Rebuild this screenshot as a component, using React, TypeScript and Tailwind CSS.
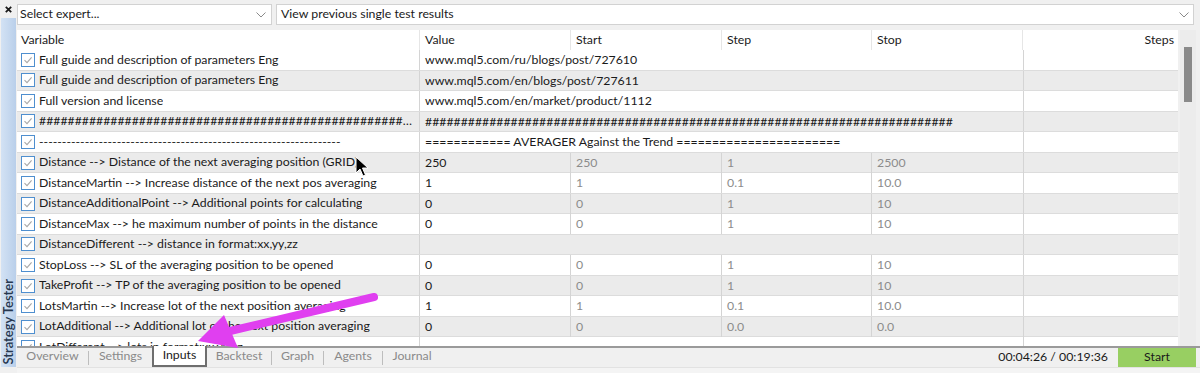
import React from 'react';

type Param = {
  name: string;
  value?: string;
  start?: string;
  step?: string;
  stop?: string;
  wide?: boolean;
};

const HASH = '#'.repeat(90);

const params: Param[] = [
  { name: 'Full guide and description of parameters Eng', value: 'www.mql5.com/ru/blogs/post/727610', wide: true },
  { name: 'Full guide and description of parameters Eng', value: 'www.mql5.com/en/blogs/post/727611', wide: true },
  { name: 'Full version and license', value: 'www.mql5.com/en/market/product/1112', wide: true },
  { name: HASH, value: '#'.repeat(74), wide: true },
  {
    name: '-'.repeat(66),
    value: '============ AVERAGER Against the Trend =======================',
    wide: true,
  },
  { name: 'Distance --> Distance of the next averaging position (GRID)', value: '250', start: '250', step: '1', stop: '2500' },
  { name: 'DistanceMartin --> Increase distance of the next pos averaging', value: '1', start: '1', step: '0.1', stop: '10.0' },
  { name: 'DistanceAdditionalPoint --> Additional points for calculating', value: '0', start: '0', step: '1', stop: '10' },
  { name: 'DistanceMax --> he maximum number of points in the distance', value: '0', start: '0', step: '1', stop: '10' },
  { name: 'DistanceDifferent --> distance in format:xx,yy,zz', value: '', wide: true },
  { name: 'StopLoss --> SL of the averaging position to be opened', value: '0', start: '0', step: '1', stop: '10' },
  { name: 'TakeProfit --> TP of the averaging position to be opened', value: '0', start: '0', step: '1', stop: '10' },
  { name: 'LotsMartin --> Increase lot of the next position averaging', value: '1', start: '1', step: '0.1', stop: '10.0' },
  { name: 'LotAdditional --> Additional lot of the next position averaging', value: '0', start: '0', step: '0.0', stop: '0.0' },
  { name: 'LotDifferent --> lots in format:xx,yy,zz', value: '', wide: true },
];

const cols = 'grid grid-cols-[403px_151px_151px_150px_151px_1fr]';

function Check() {
  return (
    <span className="flex h-[14px] w-[14px] shrink-0 items-center justify-center border border-[#4f8fcf] bg-white">
      <svg width="10" height="10" viewBox="0 0 10 10">
        <polyline points="1.5,5.2 4,7.6 8.6,2.4" fill="none" stroke="#a8a8a8" strokeWidth="1.1" />
      </svg>
    </span>
  );
}

function Chevron() {
  return (
    <svg width="10" height="6" viewBox="0 0 10 6" className="shrink-0">
      <polyline points="0.5,0.5 5,5 9.5,0.5" fill="none" stroke="#8a8a8a" strokeWidth="1" />
    </svg>
  );
}

function Row({ p, gray }: { p: Param; gray: boolean }) {
  return (
    <div className={`${cols} h-[20.5px] shrink-0 border-b border-[#dcdcdc] ${gray ? 'bg-[#ebebeb]' : 'bg-white'}`}>
      <div className="flex items-center gap-[4px] overflow-hidden border-r border-[#d4d4d4] pl-[4px] pr-[6px]">
        <Check />
        <span className="truncate">{p.name}</span>
      </div>
      {p.wide ? (
        <div className="col-span-4 overflow-hidden whitespace-nowrap pl-[5px] leading-[20px]">{p.value}</div>
      ) : (
        <>
          <div className="border-r border-[#d4d4d4] pl-[5px] leading-[20px]">{p.value}</div>
          <div className="border-r border-[#d4d4d4] pl-[5px] leading-[20px] text-[#8c8c8c]">{p.start}</div>
          <div className="border-r border-[#d4d4d4] pl-[5px] leading-[20px] text-[#8c8c8c]">{p.step}</div>
          <div className="pl-[5px] leading-[20px] text-[#8c8c8c]">{p.stop}</div>
        </>
      )}
      <div className="border-l border-[#d4d4d4]" />
    </div>
  );
}

const tabs = [
  { label: 'Overview', w: 'w-[71px]', sep: true },
  { label: 'Settings', w: 'w-[63px]', sep: false },
  { label: 'Inputs', w: 'w-[55px]', sep: false, active: true },
  { label: 'Backtest', w: 'w-[64px]', sep: true },
  { label: 'Graph', w: 'w-[51px]', sep: true },
  { label: 'Agents', w: 'w-[58px]', sep: true },
  { label: 'Journal', w: 'w-[58px]', sep: false },
];

export default function App() {
  return (
    <div className="relative flex h-[373px] w-[1200px] overflow-hidden bg-[#f0f0f0] font-['Lato',sans-serif] text-[12.3px] text-[#1a1a1a]">
      <aside className="flex w-[17px] shrink-0 flex-col">
        <div className="flex h-[18px] items-center justify-center">
          <svg width="7" height="7" viewBox="0 0 7 7">
            <path d="M0.8 0.8 L6.2 6.2 M6.2 0.8 L0.8 6.2" stroke="#1a1a1a" strokeWidth="1.8" />
          </svg>
        </div>
        <div className="ml-[1px] mr-[1px] flex h-[349px] items-end justify-center bg-gradient-to-r from-[#d3e2f4] to-[#b9cfea] pb-[2px]">
          <span className="rotate-180 whitespace-nowrap text-[13px] font-semibold leading-none text-[#26374f] [writing-mode:vertical-rl]">
            Strategy Tester
          </span>
        </div>
      </aside>

      <main className="flex min-w-0 flex-1 flex-col">
        <div className="flex h-[30px] shrink-0 gap-[4px] pr-[6px] pt-[4px]">
          <div className="flex h-[21px] w-[255px] items-center justify-between border border-[#d2d2d2] bg-white pl-[2px] pr-[5px]">
            <span>Select expert...</span>
            <Chevron />
          </div>
          <div className="flex h-[21px] flex-1 items-center justify-between border border-[#d2d2d2] bg-white pl-[4px] pr-[4px]">
            <span>View previous single test results</span>
            <Chevron />
          </div>
        </div>

        <div className="flex h-[316px] shrink-0 overflow-hidden">
          <div className="flex w-[1161px] flex-col overflow-hidden">
            <div className={`${cols} h-[20px] shrink-0 bg-white leading-[20px]`}>
              <div className="border-r border-[#e6e6e6] pl-[4px]">Variable</div>
              <div className="border-r border-[#e6e6e6] pl-[5px]">Value</div>
              <div className="border-r border-[#e6e6e6] pl-[5px]">Start</div>
              <div className="border-r border-[#e6e6e6] pl-[5px]">Step</div>
              <div className="border-r border-[#e6e6e6] pl-[5px]">Stop</div>
              <div className="pr-[4px] text-right">Steps</div>
            </div>
            {params.map((p, i) => (
              <Row key={i} p={p} gray={i % 2 === 1} />
            ))}
          </div>
          <div className="ml-[2px] flex w-[16px] flex-col bg-[#ececec] pt-[17px]">
            <div className="ml-[4px] h-[55px] w-[8px] bg-[#8a8a8a]" />
          </div>
        </div>

        <div className="flex h-[21px] shrink-0 items-stretch border-t-2 border-[#9a9a9a]">
          {tabs.map((t) => (
            <React.Fragment key={t.label}>
              <div
                className={`${t.w} -mt-[2px] flex items-center justify-center ${
                  t.active ? 'border-2 border-t-0 border-[#6e6e6e] bg-white text-[#1a1a1a]' : 'text-[#8a8a8a]'
                }`}
              >
                {t.label}
              </div>
              {t.sep && <div className="my-auto h-[14px] w-px bg-[#bdbdbd]" />}
            </React.Fragment>
          ))}
          <div className="flex flex-1 items-center justify-end pr-[10px]">00:04:26 / 00:19:36</div>
          <div className="mr-[4px] flex w-[78px] items-center justify-center bg-[#98cf62]">Start</div>
        </div>
        <div className="flex-1 border-t border-[#e2e2e2] bg-[#f4f4f4]" />
      </main>

      <svg className="pointer-events-none absolute left-0 top-0" width="1200" height="373">
        <line x1="374" y1="297" x2="226" y2="332" stroke="#e03ff0" strokeWidth="8" strokeLinecap="round" />
        <polygon points="198,341 224,315 238,348" fill="#e03ff0" />
        <path
          d="M356 157 L356 173 L360 169 L363 176 L365.5 175 L362.5 168 L368 168 Z"
          fill="#000"
          stroke="#fff"
          strokeWidth="1"
        />
      </svg>
    </div>
  );
}
